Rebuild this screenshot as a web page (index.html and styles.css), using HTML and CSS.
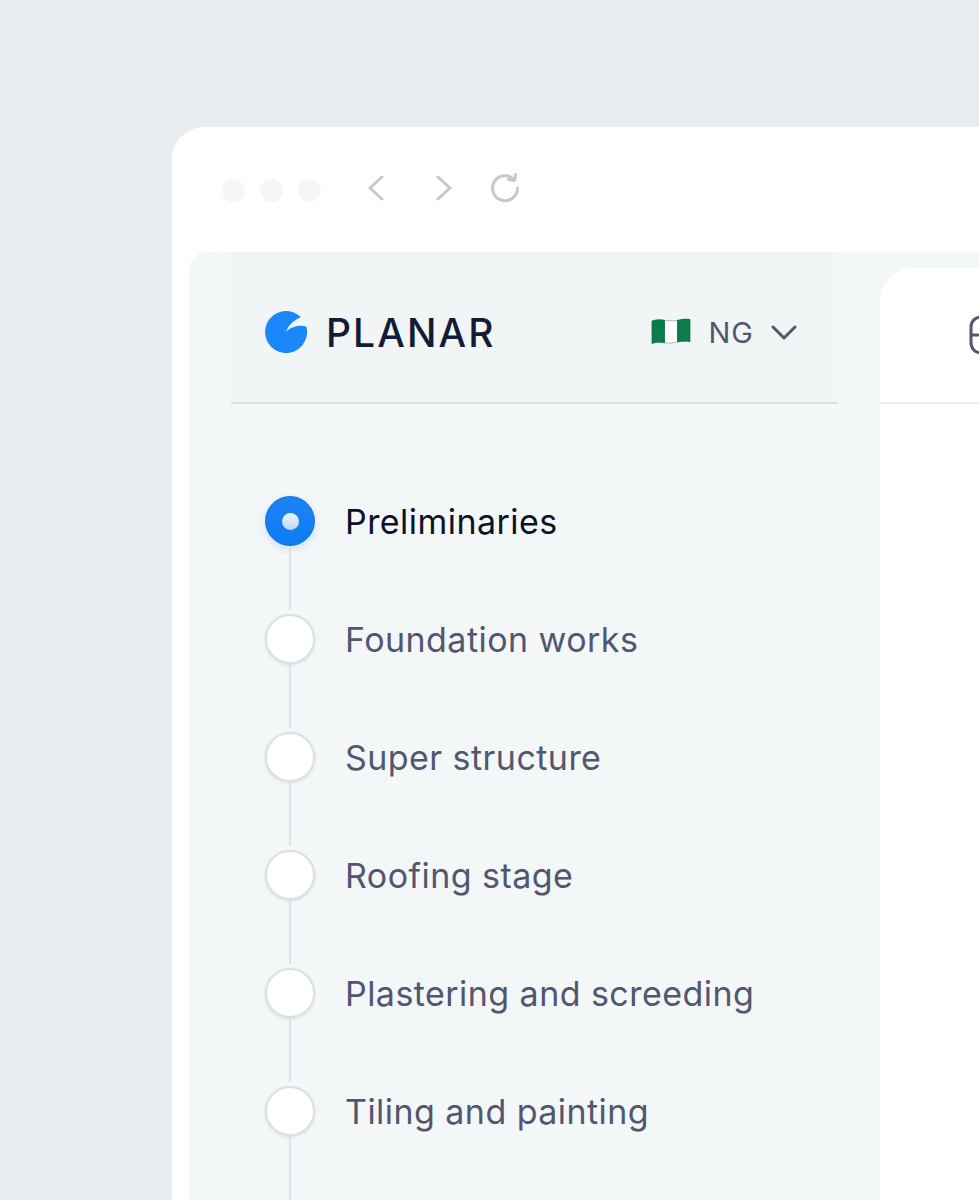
FILE: index.html
```html
<!DOCTYPE html>
<html lang="en">
<head>
    <meta charset="UTF-8">
    <meta name="viewport" content="width=device-width, initial-scale=1.0">
    <title>Planar</title>
    <link rel="stylesheet" href="styles.css">
</head>
<body>
    <div class="browser">
        <div class="toolbar">
            <div class="dots">
                <span class="dot"></span>
                <span class="dot"></span>
                <span class="dot"></span>
            </div>
            <div class="nav-icons">
                <svg class="nav-icon" width="18" height="26" viewBox="0 0 18 26"><path d="M15 2 L3 13 L15 24"/></svg>
                <svg class="nav-icon" width="18" height="26" viewBox="0 0 18 26"><path d="M3 2 L15 13 L3 24"/></svg>
                <svg class="nav-icon reload" width="30" height="30" viewBox="0 0 30 30"><path d="M24 6.5 A12.5 12.5 0 1 0 27.5 15"/><path d="M25.5 1.5 L24.5 7.5 L18.5 6.5"/></svg>
            </div>
        </div>
        <div class="app">
            <aside class="sidebar">
                <div class="sidebar-header">
                    <div class="brand">
                        <svg class="logo" width="42" height="42" viewBox="0 0 42 42"><path d="M36 6.3 A21 21 0 1 0 41.3 15.5 C33 13.5 26 16 21 21 C23.5 14 29 9 36 6.3 Z"/></svg>
                        <span class="brand-name">PLANAR</span>
                    </div>
                    <div class="country">
                        <svg class="flag" width="40" height="28" viewBox="0 0 40 28">
                            <path fill="#ffffff" stroke="#a9b3b1" stroke-width="0.9" d="M13.5 3.2 C18 4 22 4.2 26.5 3.3 V25 C22 26 18 26.4 13.5 25.8 Z"/>
                            <path fill="#0b7d4b" stroke="#0a6b41" stroke-width="0.7" d="M1 4 C5 2.5 9 2.5 13.5 3.2 V25.8 C9 25 5 25 1 26.5 Z"/>
                            <path fill="#0b7d4b" stroke="#0a6b41" stroke-width="0.7" d="M26.5 3.3 C31 2.3 35 1.6 39 2.4 V24.6 C35 24 31 24 26.5 25 Z"/>
                        </svg>
                        <span class="country-code">NG</span>
                        <svg class="chevron" width="26" height="16" viewBox="0 0 26 16"><path d="M2 3 L13 14 L24 3"/></svg>
                    </div>
                </div>
                <ol class="steps">
                    <li class="step active"><span class="marker"></span><span class="step-label">Preliminaries</span></li>
                    <li class="step"><span class="marker"></span><span class="step-label">Foundation works</span></li>
                    <li class="step"><span class="marker"></span><span class="step-label">Super structure</span></li>
                    <li class="step"><span class="marker"></span><span class="step-label">Roofing stage</span></li>
                    <li class="step"><span class="marker"></span><span class="step-label">Plastering and screeding</span></li>
                    <li class="step"><span class="marker"></span><span class="step-label">Tiling and painting</span></li>
                </ol>
            </aside>
            <main class="content">
                <div class="content-header">
                    <svg class="tab-icon" width="40" height="40" viewBox="0 0 40 40"><rect x="2" y="2" width="36" height="36" rx="10"/><path d="M2 20 H38"/></svg>
                </div>
            </main>
        </div>
    </div>
</body>
</html>
```

FILE: styles.css
```css
html, body {
    height: 100%;
}

body {
    margin: 0;
    padding: 127px 0 0 172px;
    box-sizing: border-box;
    background-color: #e8edf0;
    font-family: Inter, "Liberation Sans", sans-serif;
    overflow: hidden;
}

.browser {
    width: 807px;
    height: 1073px;
    background-color: #fff;
    border-radius: 32px 0 0 0;
    padding-left: 17px;
    box-sizing: border-box;
}

.toolbar {
    display: flex;
    align-items: center;
    height: 125px;
    padding: 0 0 0 33px;
    box-sizing: border-box;
}

.dots {
    display: flex;
    gap: 15px;
    margin-top: 2px;
}

.dot {
    width: 23px;
    height: 23px;
    border-radius: 50%;
    background-color: #f5f6f9;
}

.nav-icons {
    display: flex;
    align-items: center;
    margin: -3px 0 0 46px;
    gap: 50px;
}

.nav-icon {
    fill: none;
    stroke: #c6c8ce;
    stroke-width: 3;
    stroke-linecap: round;
    stroke-linejoin: round;
}

.reload {
    margin-left: -13px;
}

.app {
    display: flex;
    height: 948px;
    background-color: #f4f7f8;
    border-radius: 18px 0 0 0;
}

.sidebar {
    width: 649px;
    margin-left: 42px;
    flex-shrink: 0;
}

.sidebar-header {
    display: flex;
    align-items: center;
    justify-content: space-between;
    width: 607px;
    height: 152px;
    padding: 10px 41px 0 34px;
    box-sizing: border-box;
    border-bottom: 2px solid #dae2e8;
    background-color: #f2f5f6;
}

.brand {
    display: flex;
    align-items: center;
    gap: 19px;
}

.brand-name {
    font-size: 39px;
    font-weight: 500;
    letter-spacing: 2.1px;
    color: #131b36;
}

.logo {
    fill: #1a88fb;
}

.country {
    display: flex;
    align-items: center;
}

.flag {
    margin: -2px 0 0 -4px;
}

.country-code {
    font-size: 29px;
    font-weight: 400;
    letter-spacing: 1px;
    color: #53566f;
    margin: 0 17px 0 18px;
}

.chevron {
    fill: none;
    stroke: #53566f;
    stroke-width: 3;
    stroke-linecap: round;
    stroke-linejoin: round;
}

.steps {
    list-style: none;
    margin: 0;
    padding: 92px 0 0 34px;
}

.step {
    position: relative;
    display: flex;
    align-items: center;
    gap: 30px;
    height: 50px;
    margin-bottom: 68px;
}

/* connector down to the next marker */
.step::after {
    content: "";
    position: absolute;
    left: 24px;
    top: 50px;
    width: 2px;
    height: 64px;
    background-color: #d9e3e9;
}

.marker {
    width: 50px;
    height: 50px;
    flex-shrink: 0;
    border-radius: 50%;
    box-sizing: border-box;
    background-color: #fff;
    border: 2px solid #d9e2e7;
    box-shadow: 0 1px 3px rgba(120, 145, 155, 0.25);
}

.active .marker {
    display: flex;
    align-items: center;
    justify-content: center;
    border: 1px solid #1272e4;
    background: linear-gradient(#1a83f5, #0f7bf2);
    box-shadow: 0 3px 8px rgba(30, 130, 250, 0.18);
}

.active .marker::before {
    content: "";
    width: 17px;
    height: 17px;
    border-radius: 50%;
    background: linear-gradient(#f0f5fb, #bcd8f8);
}

.step-label {
    font-size: 34px;
    font-weight: 400;
    letter-spacing: 0.45px;
    color: #53566f;
    white-space: nowrap;
}

.active .step-label {
    color: #0d1226;
}

.content {
    flex-grow: 1;
    margin-top: 16px;
    background-color: #fff;
    border-radius: 34px 0 0 0;
}

.content-header {
    display: flex;
    align-items: center;
    height: 136px;
    padding-left: 89px;
    box-sizing: border-box;
    border-bottom: 2px solid #eef0f3;
}

.tab-icon {
    fill: none;
    stroke: #53566f;
    stroke-width: 3;
}
```
